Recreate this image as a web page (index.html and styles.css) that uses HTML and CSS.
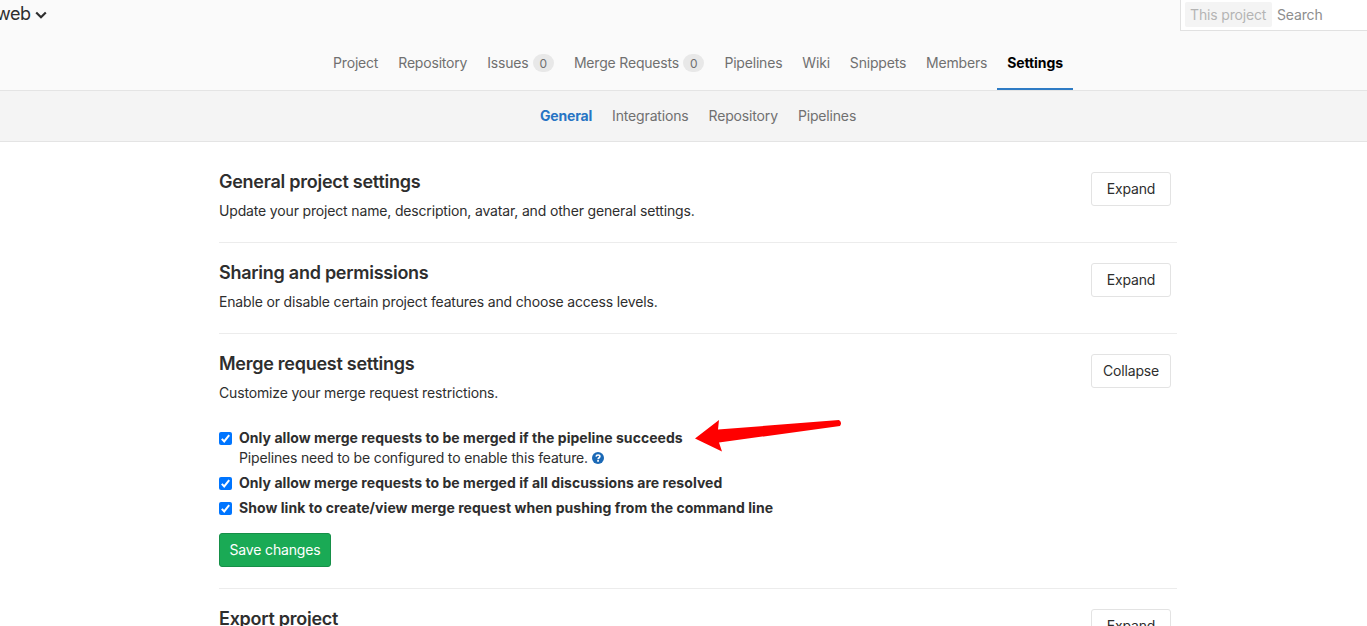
FILE: index.html
```html
<!DOCTYPE html>
<html lang="en">
<head>
<meta charset="utf-8">
<title>General · Settings</title>
<link rel="stylesheet" href="styles.css">
</head>
<body>
<header class="topbar">
  <div class="project-title">web
    <svg class="chevron" width="12" height="8" viewBox="0 0 12 8"><path d="M1.200 1.500 6 6.200l4.800-4.700" fill="none" stroke="#2e2e2e" stroke-width="2.200"/></svg>
  </div>
  <div class="search"><span class="scope">This project</span><span class="placeholder">Search</span></div>
</header>
<nav class="nav main-nav">
  <a>Project</a><a>Repository</a><a>Issues<span class="badge">0</span></a><a>Merge Requests<span class="badge">0</span></a><a>Pipelines</a><a>Wiki</a><a>Snippets</a><a>Members</a><a class="active">Settings</a>
</nav>
<nav class="nav sub-nav">
  <a class="current">General</a><a>Integrations</a><a>Repository</a><a>Pipelines</a>
</nav>
<main class="content">
  <section class="settings">
    <div class="head"><div><h4>General project settings</h4><p>Update your project name, description, avatar, and other general settings.</p></div><button class="btn">Expand</button></div>
  </section>
  <section class="settings">
    <div class="head"><div><h4>Sharing and permissions</h4><p>Enable or disable certain project features and choose access levels.</p></div><button class="btn">Expand</button></div>
  </section>
  <section class="settings open">
    <div class="head"><div><h4>Merge request settings</h4><p>Customize your merge request restrictions.</p></div><button class="btn">Collapse</button></div>
    <div class="checks">
      <div class="check">
        <svg class="box" width="13" height="13" viewBox="0 0 13 13"><rect width="13" height="13" rx="2" fill="#0075ff"/><path d="M2.800 6.900 5.200 9.400 10.200 3.100" fill="none" stroke="#fff" stroke-width="2"/></svg>
        <div class="label"><b>Only allow merge requests to be merged if the pipeline succeeds</b>
        <div class="hint"><span>Pipelines need to be configured to enable this feature.</span><svg width="12" height="12" viewBox="0 0 12 12"><circle cx="6" cy="6" r="6" fill="#1b69b6"/><path d="M4.100 4.600C4.200 2.500 7.900 2.600 7.900 4.500 7.900 5.800 6.100 5.700 6.100 7.200" fill="none" stroke="#fff" stroke-width="1.600"/><path d="M5.200 8.100h1.700v1.600H5.200z" fill="#fff"/></svg></div></div>
        <svg class="arrow" width="148" height="34" viewBox="0 0 148 34"><path d="M0 19.500 24 1 23 10.500 144 1Q147.500 3.500 145 7L24 23.500 27 32.500Z" fill="#f00"/></svg>
      </div>
      <div class="check">
        <svg class="box" width="13" height="13" viewBox="0 0 13 13"><rect width="13" height="13" rx="2" fill="#0075ff"/><path d="M2.800 6.900 5.200 9.400 10.200 3.100" fill="none" stroke="#fff" stroke-width="2"/></svg>
        <b>Only allow merge requests to be merged if all discussions are resolved</b>
      </div>
      <div class="check">
        <svg class="box" width="13" height="13" viewBox="0 0 13 13"><rect width="13" height="13" rx="2" fill="#0075ff"/><path d="M2.800 6.900 5.200 9.400 10.200 3.100" fill="none" stroke="#fff" stroke-width="2"/></svg>
        <b>Show link to create/view merge request when pushing from the command line</b>
      </div>
    </div>
    <button class="btn save">Save changes</button>
  </section>
  <section class="settings">
    <div class="head"><div><h4>Export project</h4></div><button class="btn">Expand</button></div>
  </section>
</main>
</body>
</html>
```
FILE: styles.css
```css
* { box-sizing: border-box; }
body {
  margin: 0;
  height: 626px;
  overflow: hidden;
  background: #fff;
  color: #2e2e2e;
  font: 14px/20px Inter, "Liberation Sans", sans-serif;
  letter-spacing: -0.16px;
}
.topbar {
  display: flex;
  justify-content: space-between;
  height: 37px;
  background: #fafafa;
}
.project-title {
  margin-left: -4px;
  padding-top: 4px;
  font-size: 18px;
  letter-spacing: -0.4px;
}
.chevron { margin-left: 0; vertical-align: 1px; }
.search {
  display: flex;
  align-items: center;
  gap: 5px;
  width: 187px;
  height: 31px;
  padding: 0 0 1px 4px;
  border: 1px solid #e1e1e1;
  border-top: 0;
  border-right: 0;
  background: #fff;
  color: #8d8d8d;
}
.scope {
  width: 87px;
  height: 25px;
  padding: 3px 5px 2px;
  border-radius: 2px;
  background: #f4f4f4;
  color: #b4b4b4;
}
.nav {
  display: flex;
  justify-content: center;
  padding-left: 29px;
  border-bottom: 1px solid #e4e4e4;
  color: #707070;
}
.nav a { padding: 0 10px; white-space: nowrap; }
.main-nav { height: 54px; background: #fafafa; letter-spacing: -0.19px; }
.main-nav a { height: 53px; padding-top: 16px; }
.main-nav .active {
  border-bottom: 2px solid #2e7bc4;
  color: #000;
  font-weight: 700;
  letter-spacing: -0.1px;
}
.badge {
  display: inline-block;
  height: 18px;
  margin-left: 4px;
  padding: 0 7px;
  border-radius: 9px;
  background: #e8e8e8;
  font-size: 12px;
  line-height: 19px;
}
.sub-nav { height: 51px; padding-top: 15px; background: #f4f4f4; }
.sub-nav .current { color: #2874c4; font-weight: 700; }
.content { width: 958px; margin-left: 219px; }
.settings {
  height: 91px;
  padding: 20px 0 0;
  border-bottom: 1px solid #ececec;
}
.settings:first-child { height: 101px; padding-top: 30px; }
.open { height: 255px; }
.settings:last-child { height: 37px; overflow: hidden; border: 0; }
.head { display: flex; justify-content: space-between; padding-right: 6px; }
h4 { margin: 0; font-size: 18px; line-height: 20px; font-weight: 600; letter-spacing: -0.26px; }
p { margin: 9px 0 0; }
.btn {
  width: 80px;
  height: 34px;
  padding: 0;
  border: 1px solid #e3e3e3;
  border-radius: 3px;
  background: #fff;
  color: #2e2e2e;
  font: inherit;
  letter-spacing: inherit;
}
.checks { display: flex; flex-direction: column; gap: 5px; margin-top: 25px; }
.check { display: flex; white-space: nowrap; }
.check b { font-weight: 700; letter-spacing: 0.05px; }
.label { width: 444px; }
.box { flex: none; margin: 4px 7px 0 0; }
.hint { display: flex; align-items: center; gap: 4px; }
.arrow { margin: -9px 0 0 12px; height: 34px; }
.save {
  width: 112px;
  margin-top: 15px;
  border-color: #168f48;
  background: #1aaa55;
  color: #fff;
}
```
